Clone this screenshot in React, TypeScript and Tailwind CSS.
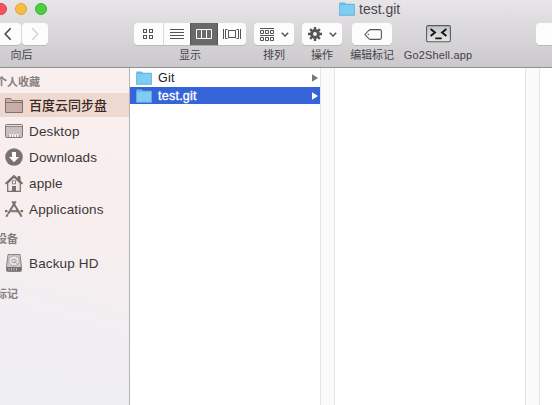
import type { ReactNode } from "react";

const font = "font-['Liberation_Sans','Noto_Sans_CJK_SC',sans-serif]";

function Folder() {
  return (
    <svg width="16" height="14" viewBox="0 0 16 14" className="shrink-0">
      <path d="M.4 1V.4H5.6L7.2 1.7H15.6V13.6H.4Z" fill="#62bbe6" />
      <path d="M.7 3H15.3V12.8H.7Z" fill="#80cdf4" />
      <path d="M.4 2V13.3H15.6V2" fill="none" stroke="#5eafd6" strokeWidth=".7" />
    </svg>
  );
}

function Item({ label, className, labelClass = "", children }: { label: string; className: string; labelClass?: string; children: ReactNode }) {
  return (
    <div className={`flex shrink-0 flex-col items-center ${className}`}>
      <div className="flex h-[22px] w-full justify-center">{children}</div>
      <div className={`mt-[2px] h-[16px] whitespace-nowrap text-[11px] leading-[16px] text-[#454347] ${labelClass}`}>{label}</div>
    </div>
  );
}

const button = "flex h-[22px] items-center justify-center bg-[#fcfcfc] shadow-[0_1px_0_#bab9bb]";

function Chevron() {
  return (
    <svg width="8" height="5" viewBox="0 0 8 5" fill="none" stroke="#555" strokeWidth="1.5">
      <path d="M.8.8 4 4 7.2.8" />
    </svg>
  );
}

function Toolbar() {
  return (
    <div className="flex items-start pt-[5px]">
      <Item label="向后" className="-ml-[5px] w-[53px]">
        <div className={`${button} w-[26px] rounded-[4px]`}>
          <svg width="8" height="14" viewBox="0 0 8 14" fill="none" stroke="#484848" strokeWidth="1.6"><path d="M6.7 1.3 1.2 7 6.7 12.7" /></svg>
        </div>
        <div className={`${button} ml-px w-[26px] rounded-[4px]`}>
          <svg width="8" height="14" viewBox="0 0 8 14" fill="none" stroke="#cfcfcf" strokeWidth="1.3"><path d="M1.3 1.3 6.8 7 1.3 12.7" /></svg>
        </div>
      </Item>
      <Item label="显示" className="ml-[86px] w-[112px]">
        <div className={`${button} w-[29px] rounded-l-[4px]`}>
          <svg width="11" height="10" viewBox="0 0 11 10" fill="none" stroke="#555">
            <rect x=".5" y=".5" width="3" height="3" /><rect x="6.5" y=".5" width="3" height="3" />
            <rect x=".5" y="6.5" width="3" height="3" /><rect x="6.5" y="6.5" width="3" height="3" />
          </svg>
        </div>
        <div className={`${button} w-[27px] border-l border-[#d9d9d9]`}>
          <svg width="14" height="10" viewBox="0 0 14 10" stroke="#555"><path d="M0 .5H14M0 3.5H14M0 6.5H14M0 9.5H14" /></svg>
        </div>
        <div className="flex h-[22px] w-[28px] items-center justify-center bg-[#696969] shadow-[inset_1px_0_0_#555,inset_-1px_0_0_#555,0_1px_0_#aaa]">
          <svg width="16" height="10" viewBox="0 0 16 10" fill="none" stroke="#fff"><path d="M.5.5H15.5V9.5H.5ZM5.5.5V9.5M10.5.5V9.5" /></svg>
        </div>
        <div className={`${button} w-[28px] rounded-r-[4px]`}>
          <svg width="18" height="10" viewBox="0 0 18 10" fill="none" stroke="#555">
            <path d="M.5 0V10M4.5.5H2.5V9.5H4.5M13.5.5H15.5V9.5H13.5M17.5 0V10" /><rect x="5.5" y="1.5" width="7" height="7" />
          </svg>
        </div>
      </Item>
      <Item label="排列" className="ml-[8px] w-[40px]">
        <div className={`${button} w-[40px] gap-[7px] rounded-[4px]`}>
          <svg width="14" height="13" viewBox="0 0 14 13" className="mt-px" fill="none" stroke="#555">
            <path d="M0 .5H14M0 7.5H14" />
            <path d="M.5 2.5H3.5V5.5H.5ZM5.5 2.5H8.5V5.5H5.5ZM10.5 2.5H13.5V5.5H10.5ZM.5 9.5H3.5V12.5H.5ZM5.5 9.5H8.5V12.5H5.5ZM10.5 9.5H13.5V12.5H10.5Z" />
          </svg>
          <Chevron />
        </div>
      </Item>
      <Item label="操作" className="ml-[8px] w-[40px]">
        <div className={`${button} w-[40px] gap-[7px] rounded-[4px]`}>
          <svg width="14" height="14" viewBox="0 0 14 14" fill="none" stroke="#555">
            <circle cx="7" cy="7" r="3.4" strokeWidth="3" />
            <path d="M7 0V3M7 11V14M0 7H3M11 7H14M2.1 2.1 4 4M10 10 11.9 11.9M11.9 2.1 10 4M4 10 2.1 11.9" strokeWidth="2.4" />
          </svg>
          <Chevron />
        </div>
      </Item>
      <Item label="编辑标记" className="ml-[8px] w-[44px]" labelClass="tracking-[-0.1px]">
        <div className={`${button} w-[40px] rounded-[4px]`}>
          <svg width="18" height="11" viewBox="0 0 18 11" className="ml-px" fill="none" stroke="#555" strokeWidth="1.1">
            <path d="M.9 5.5 4.8 1.3Q5.5.6 6.5.6H15.5Q17.4.6 17.4 2.5V8.5Q17.4 10.4 15.5 10.4H6.5Q5.5 10.4 4.8 9.7Z" /><circle cx="4.3" cy="5.5" r=".7" fill="#555" stroke="none" />
          </svg>
        </div>
      </Item>
      <Item label="Go2Shell.app" className="ml-[8px] w-[72px]" labelClass="text-[11.5px] tracking-[0.15px]">
        <svg width="25" height="18" viewBox="0 0 25 18" className="mt-[2px]">
          <defs><linearGradient id="shell" x2="0" y2="1"><stop stopColor="#bfc3c4" /><stop offset="1" stopColor="#e7e8e8" /></linearGradient></defs>
          <rect x=".6" y=".6" width="23.8" height="16.2" rx="1.5" fill="url(#shell)" stroke="#565d60" strokeWidth="1.1" />
          <path d="M4.6 4 9 7.5 4.6 11M20.4 4 16 7.5 20.4 11M9.3 13.3H15.7" fill="none" stroke="#111" strokeWidth="1.8" />
        </svg>
      </Item>
      <div className={`${button} ml-[62px] w-[26px] shrink-0 rounded-l-[4px]`} />
    </div>
  );
}

function Row({ label, icon, selected = false, className = "" }: { label: string; icon: ReactNode; selected?: boolean; className?: string }) {
  return (
    <div className={`flex items-center pl-[5px] leading-[24px] ${selected ? "h-[24px] bg-[#eed9d1] text-[13px] font-medium text-[#3d2825]" : "h-[26px] text-[13.5px] tracking-[0.15px] text-[#3b3737]"} ${className}`}>
      <span className="flex w-[18px] justify-center">{icon}</span>
      <span className="ml-[6px] whitespace-nowrap pt-px">{label}</span>
    </div>
  );
}

function Sidebar() {
  const heading = "-ml-[4px] whitespace-nowrap text-[11px] font-bold leading-[16px] text-[#857e7e]";
  return (
    <div className="h-full w-[130px] shrink-0 overflow-hidden border-r border-[#b7b3b4] bg-[linear-gradient(15deg,#efeff2_0%,#f2eef1_30%,#f8eeed_60%,#f9efee_100%)] pt-[6px]">
      <div className={heading}>个人收藏</div>
      <Row selected label="百度云同步盘" className="mt-[3px]" icon={
        <svg width="18" height="15" viewBox="0 0 18 15" fill="#c8aea7" stroke="#80716d"><path d="M.5 14.5V.5H5.5L7 2.5H17.5V14.5ZM.5 4.5H17.5" /></svg>
      } />
      <Row label="Desktop" className="mt-[1px]" icon={
        <svg width="18" height="14" viewBox="0 0 18 14"><rect x=".5" y=".5" width="17" height="13" rx="1" fill="#c9bfbe" stroke="#80797a" /><path d="M1 1.5H17" stroke="#e9e0df" /><path d="M1 2.5H17" stroke="#80797a" strokeWidth=".8" /><path d="M4 10.5H14V13H4Z" fill="#fff" /><path d="M4 11V13M6.5 11V13M9 11V13M11.5 11V13M14 11V13" stroke="#80797a" strokeWidth=".7" /></svg>
      } />
      <Row label="Downloads" icon={
        <svg width="18" height="18" viewBox="0 0 18 18"><circle cx="9" cy="9" r="8.8" fill="#7a7171" /><path d="M7 4H11V9H14L9 14.2 4 9H7Z" fill="#fff" /></svg>
      } />
      <Row label="apple" icon={
        <svg width="18" height="17" viewBox="0 0 18 17" fill="none" stroke="#776e6e"><path d="M13 5V1.5H15V7" fill="#776e6e" /><path d="M2.7 8V16.4H15.3V8L9 2Z" fill="#f1e7e6" strokeWidth="1.2" /><path d="M.6 8.8 9 1 17.4 8.8" strokeWidth="1.9" /><path d="M7.5 5.8H10.5V8.8H7.5Z" fill="#fff" strokeWidth=".9" /><path d="M7 11H11V16H7Z" fill="#776e6e" stroke="none" /></svg>
      } />
      <Row label="Applications" icon={
        <svg width="18" height="16" viewBox="0 0 18 16" fill="none" stroke="#776e6e"><path d="M7.3.3 16.7 15.7" strokeWidth="2" /><path d="M10.7.3 1.3 15.7" strokeWidth="2" strokeDasharray="14.5 .6 9" /><path d="M0 10.1H2.5M5 10.1H13M15.5 10.1H18" strokeWidth="2.4" /><path d="M5 10.1H11.5" stroke="#b3a9a9" strokeWidth=".7" /></svg>
      } />
      <div className={`${heading} mt-[9px]`}>设备</div>
      <Row label="Backup HD" className="mt-[3px]" icon={
        <svg width="16" height="18" viewBox="0 0 16 18"><path d="M2 .5H14L15.5 13V16.5Q15.5 17.5 14.5 17.5H1.5Q.5 17.5.5 16.5V13Z" fill="#cfc9ca" stroke="#8a8384" /><ellipse cx="8" cy="6.8" rx="5.2" ry="5" fill="#e9e4e5" stroke="#a09899" strokeWidth=".7" /><ellipse cx="8" cy="7" rx="2.2" ry="1.8" fill="none" stroke="#a09899" strokeWidth=".9" /><path d="M8 7 11.5 10.5" stroke="#a09899" strokeWidth=".8" /><path d="M.8 13H15.2V17H.8Z" fill="#777071" /><path d="M3 14V16.5M5.5 14V16.5M8 14V16.5M10.5 14V16.5" stroke="#cfc8c9" strokeWidth=".8" /></svg>
      } />
      <div className={`${heading} mt-[10px]`}>标记</div>
    </div>
  );
}

function Entry({ label, selected = false }: { label: string; selected?: boolean }) {
  return (
    <div className={`flex items-center pl-[6px] pr-[2px] text-[12.5px] ${selected ? "h-[17px] bg-[#3664d8] text-white [-webkit-text-stroke:0.35px_white]" : "h-[18px] text-[#202020]"}`}>
      <Folder />
      <span className={`ml-[6px] leading-[16px] tracking-[0.25px] ${selected ? "pt-px" : ""}`}>{label}</span>
      <svg className="ml-auto" width="6" height="8" viewBox="0 0 6 8"><path d="M0 .3 6 4 0 7.7Z" fill={selected ? "#fff" : "#777"} /></svg>
    </div>
  );
}

const gutter = "w-[15px] shrink-0 border-x border-[#e5e5e5] bg-[#fafafa]";

export default function App() {
  return (
    <div className={`flex h-[405px] w-[552px] flex-col overflow-hidden bg-white ${font}`}>
      <header className="h-[68px] shrink-0 border-b border-[#918f92] bg-linear-to-b from-[#e7e5e8] to-[#cbc9cc]">
        <div className="flex h-[18px] items-center">
          <div className="-ml-[5px] flex gap-[8px]">
            <span className="size-[12px] rounded-full border border-[#db4451] bg-[#f55260]" />
            <span className="size-[12px] rounded-full border border-[#dda13a] bg-[#f9bd40]" />
            <span className="size-[12px] rounded-full border border-[#3daf38] bg-[#4bcf40]" />
          </div>
          <div className="ml-[292px] flex items-center gap-[4px] text-[14px] leading-[18px] text-[#4a484b]">
            <Folder /><span>test.git</span>
          </div>
        </div>
        <Toolbar />
      </header>
      <main className="flex min-h-0 flex-1">
        <Sidebar />
        <div className="w-[190px] shrink-0 pt-px">
          <Entry label="Git" />
          <Entry label="test.git" selected />
        </div>
        <div className={gutter} />
        <div className="w-[190px] shrink-0" />
        <div className={gutter} />
        <div className="flex-1" />
      </main>
    </div>
  );
}
